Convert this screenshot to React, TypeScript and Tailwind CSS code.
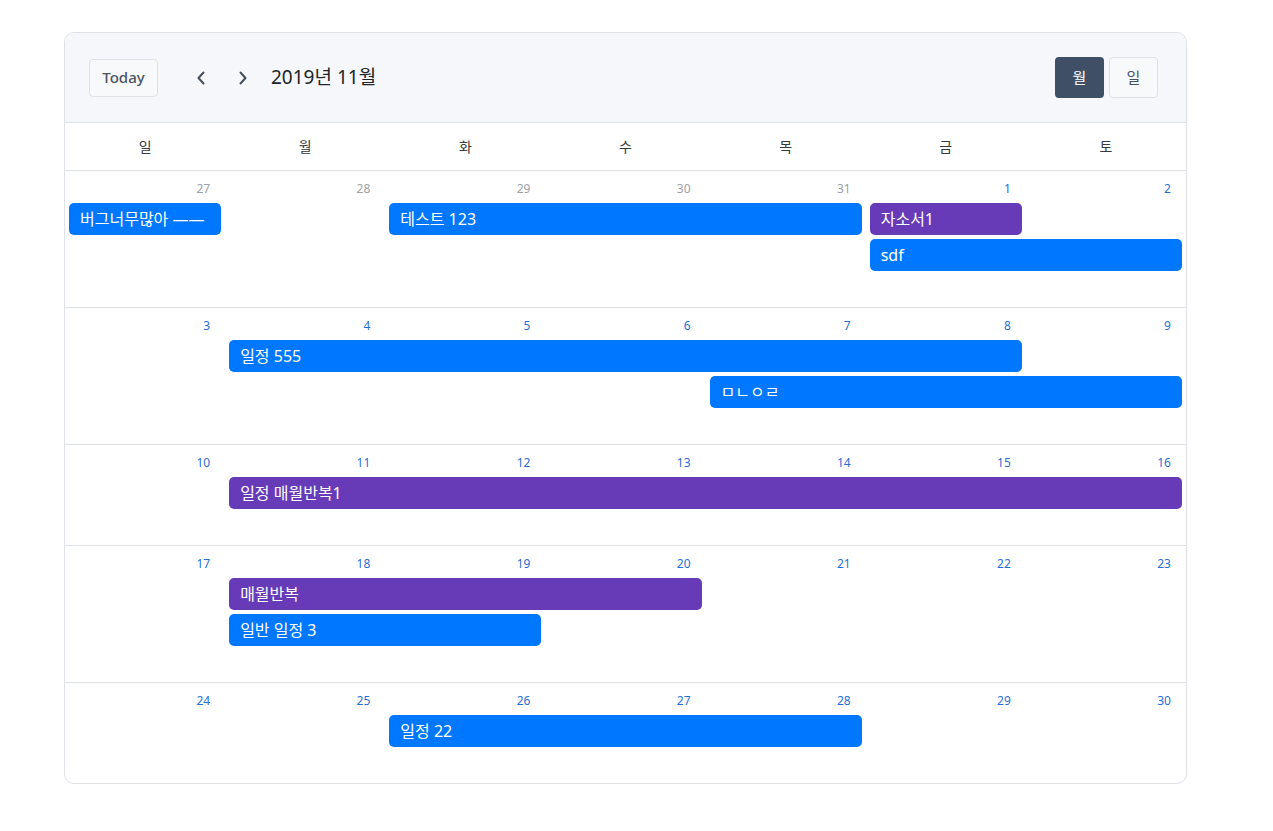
import React from "react";

type Ev = { title: string; start: number; span: number; color: "blue" | "purple" };
type Week = { days: { n: number; cur: boolean }[]; rows: Ev[][] };

const startCls: Record<number, string> = {
  1: "col-start-1",
  2: "col-start-2",
  3: "col-start-3",
  4: "col-start-4",
  5: "col-start-5",
  6: "col-start-6",
  7: "col-start-7",
};
const spanCls: Record<number, string> = {
  1: "col-span-1",
  2: "col-span-2",
  3: "col-span-3",
  4: "col-span-4",
  5: "col-span-5",
  6: "col-span-6",
  7: "col-span-7",
};

const mk = (arr: number[], curFrom: number) => arr.map((n, i) => ({ n, cur: i >= curFrom }));

const weeks: Week[] = [
  {
    days: mk([27, 28, 29, 30, 31, 1, 2], 5),
    rows: [
      [
        { title: "버그너무많아 ——", start: 1, span: 1, color: "blue" },
        { title: "테스트 123", start: 3, span: 3, color: "blue" },
        { title: "자소서1", start: 6, span: 1, color: "purple" },
      ],
      [{ title: "sdf", start: 6, span: 2, color: "blue" }],
    ],
  },
  {
    days: mk([3, 4, 5, 6, 7, 8, 9], 0),
    rows: [
      [{ title: "일정 555", start: 2, span: 5, color: "blue" }],
      [{ title: "ㅁㄴㅇㄹ", start: 5, span: 3, color: "blue" }],
    ],
  },
  {
    days: mk([10, 11, 12, 13, 14, 15, 16], 0),
    rows: [[{ title: "일정 매월반복1", start: 2, span: 6, color: "purple" }]],
  },
  {
    days: mk([17, 18, 19, 20, 21, 22, 23], 0),
    rows: [
      [{ title: "매월반복", start: 2, span: 3, color: "purple" }],
      [{ title: "일반 일정 3", start: 2, span: 2, color: "blue" }],
    ],
  },
  {
    days: mk([24, 25, 26, 27, 28, 29, 30], 0),
    rows: [[{ title: "일정 22", start: 3, span: 3, color: "blue" }]],
  },
];

const dow = ["일", "월", "화", "수", "목", "금", "토"];

export default function App() {
  return (
    <div
      className="min-h-[831px] bg-white pt-[32px] pl-[64px]"
      style={{ fontFamily: "'Noto Sans', 'Noto Sans CJK KR', sans-serif" }}
    >
      <div className="w-[1123px] rounded-[10px] border border-[#dee2e6] overflow-hidden bg-white">
        {/* header */}
        <div className="h-[90px] bg-[#f6f7fb] border-b border-[#dee2e6] flex items-center justify-between pl-[24px] pr-[28px]">
          <div className="flex items-center">
            <button className="h-[38px] w-[69px] rounded-[4px] border border-[#dde1e6] bg-[#f8f9fb] text-[15px] font-medium text-[#4a5260] flex items-center justify-center">
              Today
            </button>
            <button className="ml-[33px] w-[20px] h-[30px] flex items-center justify-center text-[#454f5e]">
              <svg width="10" height="14" viewBox="0 0 10 14" fill="none">
                <path d="M7.5 1.5 L2.5 7 L7.5 12.5" stroke="currentColor" strokeWidth="2" strokeLinecap="round" strokeLinejoin="round" />
              </svg>
            </button>
            <button className="ml-[22px] w-[20px] h-[30px] flex items-center justify-center text-[#454f5e]">
              <svg width="10" height="14" viewBox="0 0 10 14" fill="none">
                <path d="M2.5 1.5 L7.5 7 L2.5 12.5" stroke="currentColor" strokeWidth="2" strokeLinecap="round" strokeLinejoin="round" />
              </svg>
            </button>
            <div className="ml-[18px] text-[19px] text-[#212529] leading-none">2019년 11월</div>
          </div>
          <div className="flex items-center gap-[5px]">
            <button className="h-[41px] w-[49px] rounded-[4px] bg-[#3e4f66] text-white text-[15px] flex items-center justify-center">
              월
            </button>
            <button className="h-[41px] w-[49px] rounded-[4px] border border-[#dde1e6] bg-[#f8f9fb] text-[#454f5e] text-[15px] flex items-center justify-center">
              일
            </button>
          </div>
        </div>

        {/* day of week */}
        <div className="grid grid-cols-7 h-[48px] border-b border-[#dee2e6]">
          {dow.map((d) => (
            <div key={d} className="flex items-center justify-center text-[14px] text-[#343a40]">
              {d}
            </div>
          ))}
        </div>

        {/* weeks */}
        {weeks.map((w, wi) => (
          <div
            key={wi}
            className={`pb-[36px] ${wi < weeks.length - 1 ? "border-b border-[#dee2e6]" : ""}`}
          >
            <div className="grid grid-cols-7 h-[32px] pt-[9px]">
              {w.days.map((d, di) => (
                <div
                  key={di}
                  className={`text-right pr-[15px] text-[12px] leading-[18px] ${d.cur ? "text-[#1f6fd6]" : "text-[#9ba1a8]"}`}
                >
                  {d.n}
                </div>
              ))}
            </div>
            <div className="flex flex-col gap-[4px]">
              {w.rows.map((row, ri) => (
                <div key={ri} className="grid grid-cols-7 h-[32px]">
                  {row.map((e, ei) => (
                    <div
                      key={ei}
                      className={`${startCls[e.start]} ${spanCls[e.span]} mx-[4px] h-[32px] rounded-[5px] px-[11px] flex items-center text-[16px] text-white whitespace-nowrap overflow-hidden ${
                        e.color === "blue" ? "bg-[#0077ff]" : "bg-[#673ab7]"
                      }`}
                    >
                      {e.title}
                    </div>
                  ))}
                </div>
              ))}
            </div>
          </div>
        ))}
      </div>
    </div>
  );
}
